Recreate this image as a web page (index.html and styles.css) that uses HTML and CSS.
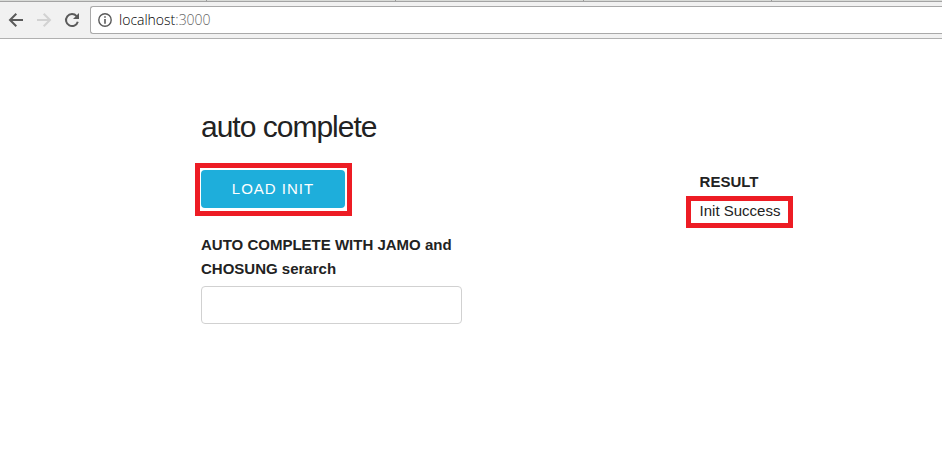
FILE: index.html
```html
<!DOCTYPE html>
<html lang="en">
<head>
<meta charset="utf-8">
<title>auto complete</title>
<link rel="stylesheet" href="styles.css">
</head>
<body>
<header class="browser">
  <div class="tabs"><i class="tab tab-first"></i><i class="tab"></i><i class="tab"></i><i class="tab"></i></div>
  <nav class="toolbar">
    <button class="nav-button" type="button" aria-label="Back">
      <svg width="16" height="16" viewBox="0 0 16 16" fill="none" stroke="#5a5a5a" stroke-width="2"><path d="M15 8H2M8.3 1.7 2 8l6.3 6.3"/></svg>
    </button>
    <button class="nav-button" type="button" aria-label="Forward" disabled>
      <svg width="16" height="16" viewBox="0 0 16 16" fill="none" stroke="#d2d2d2" stroke-width="2"><path d="M1 8h13M7.7 1.7 14 8l-6.3 6.3"/></svg>
    </button>
    <button class="nav-button" type="button" aria-label="Reload">
      <svg width="16" height="16" viewBox="0 0 16 16"><path d="M12.6 4.2A6 6 0 1 0 13.8 9.7" fill="none" stroke="#5a5a5a" stroke-width="2"/><path d="M15 1v6H9z" fill="#5a5a5a"/></svg>
    </button>
    <div class="address">
      <svg width="14" height="14" viewBox="0 0 14 14"><circle cx="7" cy="7" r="6.2" fill="none" stroke="#5a5a5a" stroke-width="1.4"/><path d="M6.2 3.2h1.6v1.6H6.2zM6.2 6h1.6v4.8H6.2z" fill="#5a5a5a"/></svg>
      <span class="url">localhost<span class="port">:3000</span></span>
    </div>
  </nav>
</header>
<main class="container">
  <h1>auto complete</h1>
  <div class="row">
    <form class="search">
      <div class="mark mark-button"><button class="load" type="button">LOAD INIT</button></div>
      <label for="query">AUTO COMPLETE WITH JAMO and CHOSUNG serarch</label>
      <input id="query" type="text">
    </form>
    <section class="result">
      <h2>RESULT</h2>
      <p class="mark mark-result">Init Success</p>
    </section>
  </div>
</main>
</body>
</html>
```
FILE: styles.css
```css
* {
  box-sizing: border-box;
}

body {
  margin: 0;
  background: #fff;
  color: #222;
  font: 15px/24px "Liberation Sans", Arial, sans-serif;
}

.browser {
  border-bottom: 1px solid #b0b0b0;
  background: #f1f1f1;
  overflow: hidden;
}

.tabs {
  display: flex;
  height: 2px;
  background: #d9dbd8;
  border-bottom: 1px solid #a3a3a3;
}

.tab {
  width: 20%;
  border-right: 1px solid #999;
}

.tab-first {
  width: 22%;
}

.toolbar {
  display: flex;
  align-items: center;
  height: 36px;
  padding-left: 8px;
  gap: 12px;
}

.nav-button {
  display: flex;
  padding: 0;
  border: 0;
  background: none;
}

.address {
  display: flex;
  flex: 1;
  align-items: center;
  gap: 7px;
  height: 28px;
  margin-left: -2px;
  padding-left: 7px;
  border: 1px solid #a9a9a9;
  border-right: 0;
  border-radius: 3px 0 0 3px;
  background: #fff;
}

.url {
  color: #000;
  font: 300 14px/20px "Open Sans", sans-serif;
}

.port {
  color: #666;
}

.container {
  margin-left: 201px;
  padding-top: 70px;
}

h1 {
  margin: 0 0 18px;
  font-size: 30px;
  font-weight: 400;
  line-height: 36px;
  letter-spacing: -1px;
}

.row {
  display: grid;
  grid-template-columns: 261fr 242fr;
  column-gap: 32%;
}

.mark {
  border: 5px solid #ed1c24;
}

.mark-button {
  width: 157px;
  margin: 0 0 17px -6px;
  padding: 2px 2px 3px 1px;
}

.load {
  display: block;
  width: 100%;
  height: 38px;
  padding: 0;
  border: 0;
  border-radius: 4px;
  background: #1eaedb;
  color: #fff;
  font: 15px/38px "Liberation Sans", Arial, sans-serif;
  letter-spacing: 1px;
}

label {
  display: block;
  margin-bottom: 5px;
  font-weight: 700;
}

input {
  display: block;
  width: 100%;
  height: 38px;
  padding: 6px 10px;
  border: 1px solid #d1d1d1;
  border-radius: 4px;
  background: #fff;
  font: inherit;
}

.result {
  padding-top: 7px;
}

h2 {
  margin: 0 0 2px;
  font-size: 15px;
  line-height: 24px;
}

.mark-result {
  width: max-content;
  margin: 0 0 0 -14px;
  padding: 0 8px 2px 9px;
  line-height: 20px;
}
```
